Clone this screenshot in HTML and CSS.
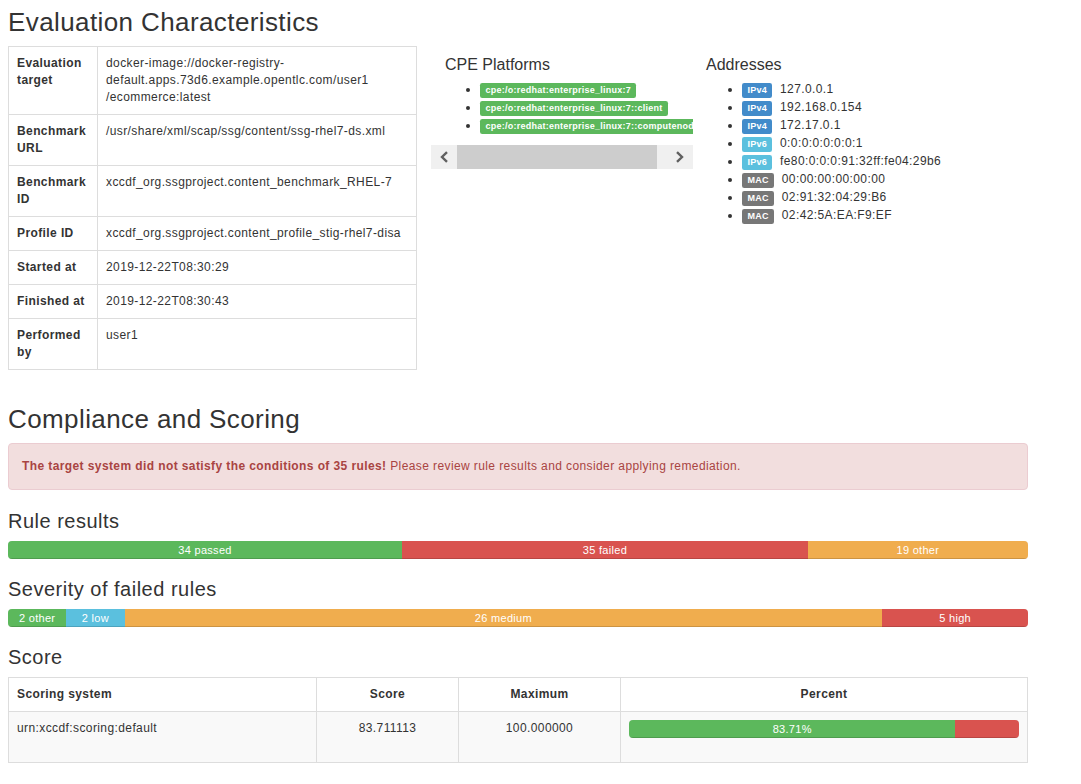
FILE: index.html
```html
<!DOCTYPE html>
<html>
<head>
<meta charset="utf-8">
<title>Evaluation Characteristics</title>
<link rel="stylesheet" href="styles.css">
</head>
<body>
<div class="container">
  <h2 class="title">Evaluation Characteristics</h2>
  <div class="row">
    <div class="col-chars">
      <table class="tbl tbl-chars">
        <colgroup><col class="c-head"><col></colgroup>
        <tr><th>Evaluation target</th><td>docker-image://docker-registry-default.apps.73d6.example.opentlc.com/user1<br>/ecommerce:latest</td></tr>
        <tr><th>Benchmark URL</th><td>/usr/share/xml/scap/ssg/content/ssg-rhel7-ds.xml</td></tr>
        <tr><th>Benchmark ID</th><td>xccdf_org.ssgproject.content_benchmark_RHEL-7</td></tr>
        <tr><th>Profile ID</th><td>xccdf_org.ssgproject.content_profile_stig-rhel7-disa</td></tr>
        <tr><th>Started at</th><td>2019-12-22T08:30:29</td></tr>
        <tr><th>Finished at</th><td>2019-12-22T08:30:43</td></tr>
        <tr><th>Performed by</th><td>user1</td></tr>
      </table>
    </div>
    <div class="col-cpe">
      <div class="cpe-scroll">
        <h4>CPE Platforms</h4>
        <ul class="cpe-list">
          <li><span class="label label-success">cpe:/o:redhat:enterprise_linux:7</span></li>
          <li><span class="label label-success">cpe:/o:redhat:enterprise_linux:7::client</span></li>
          <li><span class="label label-success">cpe:/o:redhat:enterprise_linux:7::computenode</span></li>
        </ul>
      </div>
      <div class="hscroll">
        <span class="hs-btn"><svg width="10" height="12" viewBox="0 0 10 12"><polyline points="8,1.2 3,6 8,10.8" fill="none" stroke="#606060" stroke-width="2.4"/></svg></span>
        <span class="hs-thumb"></span>
        <span class="hs-track"></span>
        <span class="hs-btn"><svg width="10" height="12" viewBox="0 0 10 12"><polyline points="2,1.2 7,6 2,10.8" fill="none" stroke="#606060" stroke-width="2.4"/></svg></span>
      </div>
    </div>
    <div class="col-addr">
      <h4>Addresses</h4>
      <ul class="addr-list">
        <li><span class="label label-primary">IPv4</span> 127.0.0.1</li>
        <li><span class="label label-primary">IPv4</span> 192.168.0.154</li>
        <li><span class="label label-primary">IPv4</span> 172.17.0.1</li>
        <li><span class="label label-info">IPv6</span> 0:0:0:0:0:0:0:1</li>
        <li><span class="label label-info">IPv6</span> fe80:0:0:0:91:32ff:fe04:29b6</li>
        <li><span class="label label-default">MAC</span> 00:00:00:00:00:00</li>
        <li><span class="label label-default">MAC</span> 02:91:32:04:29:B6</li>
        <li><span class="label label-default">MAC</span> 02:42:5A:EA:F9:EF</li>
      </ul>
    </div>
  </div>

  <h2 class="sec">Compliance and Scoring</h2>
  <div class="alert"><strong>The target system did not satisfy the conditions of 35 rules!</strong> Please review rule results and consider applying remediation.</div>

  <h3>Rule results</h3>
  <div class="progress">
    <div class="bar bar-success" style="width: 38.636%">34 passed</div>
    <div class="bar bar-danger" style="width: 39.773%">35 failed</div>
    <div class="bar bar-warning" style="width: 21.591%">19 other</div>
  </div>

  <h3>Severity of failed rules</h3>
  <div class="progress">
    <div class="bar bar-success" style="width: 5.714%">2 other</div>
    <div class="bar bar-info" style="width: 5.714%">2 low</div>
    <div class="bar bar-warning" style="width: 74.286%">26 medium</div>
    <div class="bar bar-danger" style="width: 14.286%">5 high</div>
  </div>

  <h3>Score</h3>
  <table class="tbl tbl-score">
    <colgroup><col class="s1"><col class="s2"><col class="s3"><col></colgroup>
    <tr class="head"><th>Scoring system</th><th class="center">Score</th><th class="center">Maximum</th><th class="center">Percent</th></tr>
    <tr class="striped">
      <td>urn:xccdf:scoring:default</td>
      <td class="center">83.711113</td>
      <td class="center">100.000000</td>
      <td>
        <div class="progress progress-cell">
          <div class="bar bar-success" style="width: 83.71%">83.71%</div>
          <div class="bar bar-danger" style="width: 16.29%"></div>
        </div>
      </td>
    </tr>
  </table>
</div>
</body>
</html>
```
FILE: styles.css
```css
html, body {
  background: #fff;
}
body {
  margin: 8px;
  font-family: "Liberation Sans", Arial, Helvetica, sans-serif;
  font-size: 12px;
  line-height: 17px;
  letter-spacing: 0.4px;
  color: #333;
}
.container {
  width: 1020px;
}
h2, h3, h4 {
  font-weight: 400;
  color: #333;
}
h2 {
  font-size: 26px;
  line-height: 29px;
  letter-spacing: 0.4px;
}
h2.title {
  margin: 0 0 9px;
}
h2.sec {
  margin: 35px 0 9px;
}
h3 {
  font-size: 20px;
  line-height: 22px;
  letter-spacing: 0.5px;
  margin: 0 0 9px;
}
h4 {
  font-size: 16px;
  line-height: 18px;
  letter-spacing: 0;
  margin: 10px 0 6px;
}

/* top row */
.row {
  display: flex;
  align-items: flex-start;
}
.col-chars {
  width: 409px;
  flex: none;
}
.col-cpe {
  width: 262px;
  margin-left: 14px;
  flex: none;
}
.cpe-scroll {
  overflow: hidden;
  padding: 0 15px 0 14px;
  white-space: nowrap;
}
.col-addr {
  padding-left: 13px;
  flex: none;
}
ul {
  margin: 0 0 10px;
  padding-left: 35px;
}
.cpe-list {
  margin-bottom: 11px;
}
.addr-list {
  padding-left: 36px;
}
li {
  line-height: 18px;
}
.addr-list .label {
  margin-right: 4px;
}

.label {
  display: inline;
  padding: .2em .6em .3em;
  font-size: 9px;
  font-weight: 700;
  line-height: 1;
  letter-spacing: 0.25px;
  color: #fff;
  text-align: center;
  white-space: nowrap;
  vertical-align: baseline;
  border-radius: .25em;
}
.label-success { background: #5cb85c; }
.label-primary { background: #428bca; }
.label-info { background: #5bc0de; }
.label-default { background: #777; }

/* fake horizontal scrollbar */
.hscroll {
  display: flex;
  height: 24px;
  background: #f0f0f0;
}
.hs-btn {
  width: 26px;
  display: flex;
  align-items: center;
  justify-content: center;
  flex: none;
}
.hs-thumb {
  width: 200px;
  background: #cdcdcd;
  flex: none;
}
.hs-track {
  flex: 1;
}

/* tables */
.tbl {
  border-collapse: collapse;
  border-spacing: 0;
  table-layout: fixed;
}
.tbl th, .tbl td {
  border: 1px solid #ddd;
  padding: 8px;
  vertical-align: top;
  text-align: left;
  line-height: 17px;
}
.tbl th {
  font-weight: 700;
}
.tbl-chars {
  width: 409px;
}
.c-head {
  width: 89px;
}
.tbl-score {
  width: 1020px;
}
.s1 { width: 308px; }
.s2 { width: 142px; }
.s3 { width: 162px; }
.tbl .center {
  text-align: center;
}
.striped td {
  background: #f9f9f9;
}

/* alert */
.alert {
  padding: 14px 13px;
  border: 1px solid #ebccd1;
  background: #f2dede;
  color: #a94442;
  border-radius: 4px;
  margin-bottom: 20px;
}

/* progress */
.progress {
  display: flex;
  height: 18px;
  margin-bottom: 19px;
  overflow: hidden;
  background: #f5f5f5;
  border-radius: 4px;
  box-shadow: inset 0 1px 2px rgba(0,0,0,.1);
}
.bar {
  height: 100%;
  font-size: 11px;
  line-height: 18px;
  letter-spacing: 0.3px;
  color: #fff;
  text-align: center;
  white-space: nowrap;
  box-shadow: inset 0 -1px 0 rgba(0,0,0,.15);
}
.bar-success { background: #5cb85c; }
.bar-danger { background: #d9534f; }
.bar-warning { background: #f0ad4e; }
.bar-info { background: #5bc0de; }
.progress-cell {
  margin: 0 0 16px;
}
```
